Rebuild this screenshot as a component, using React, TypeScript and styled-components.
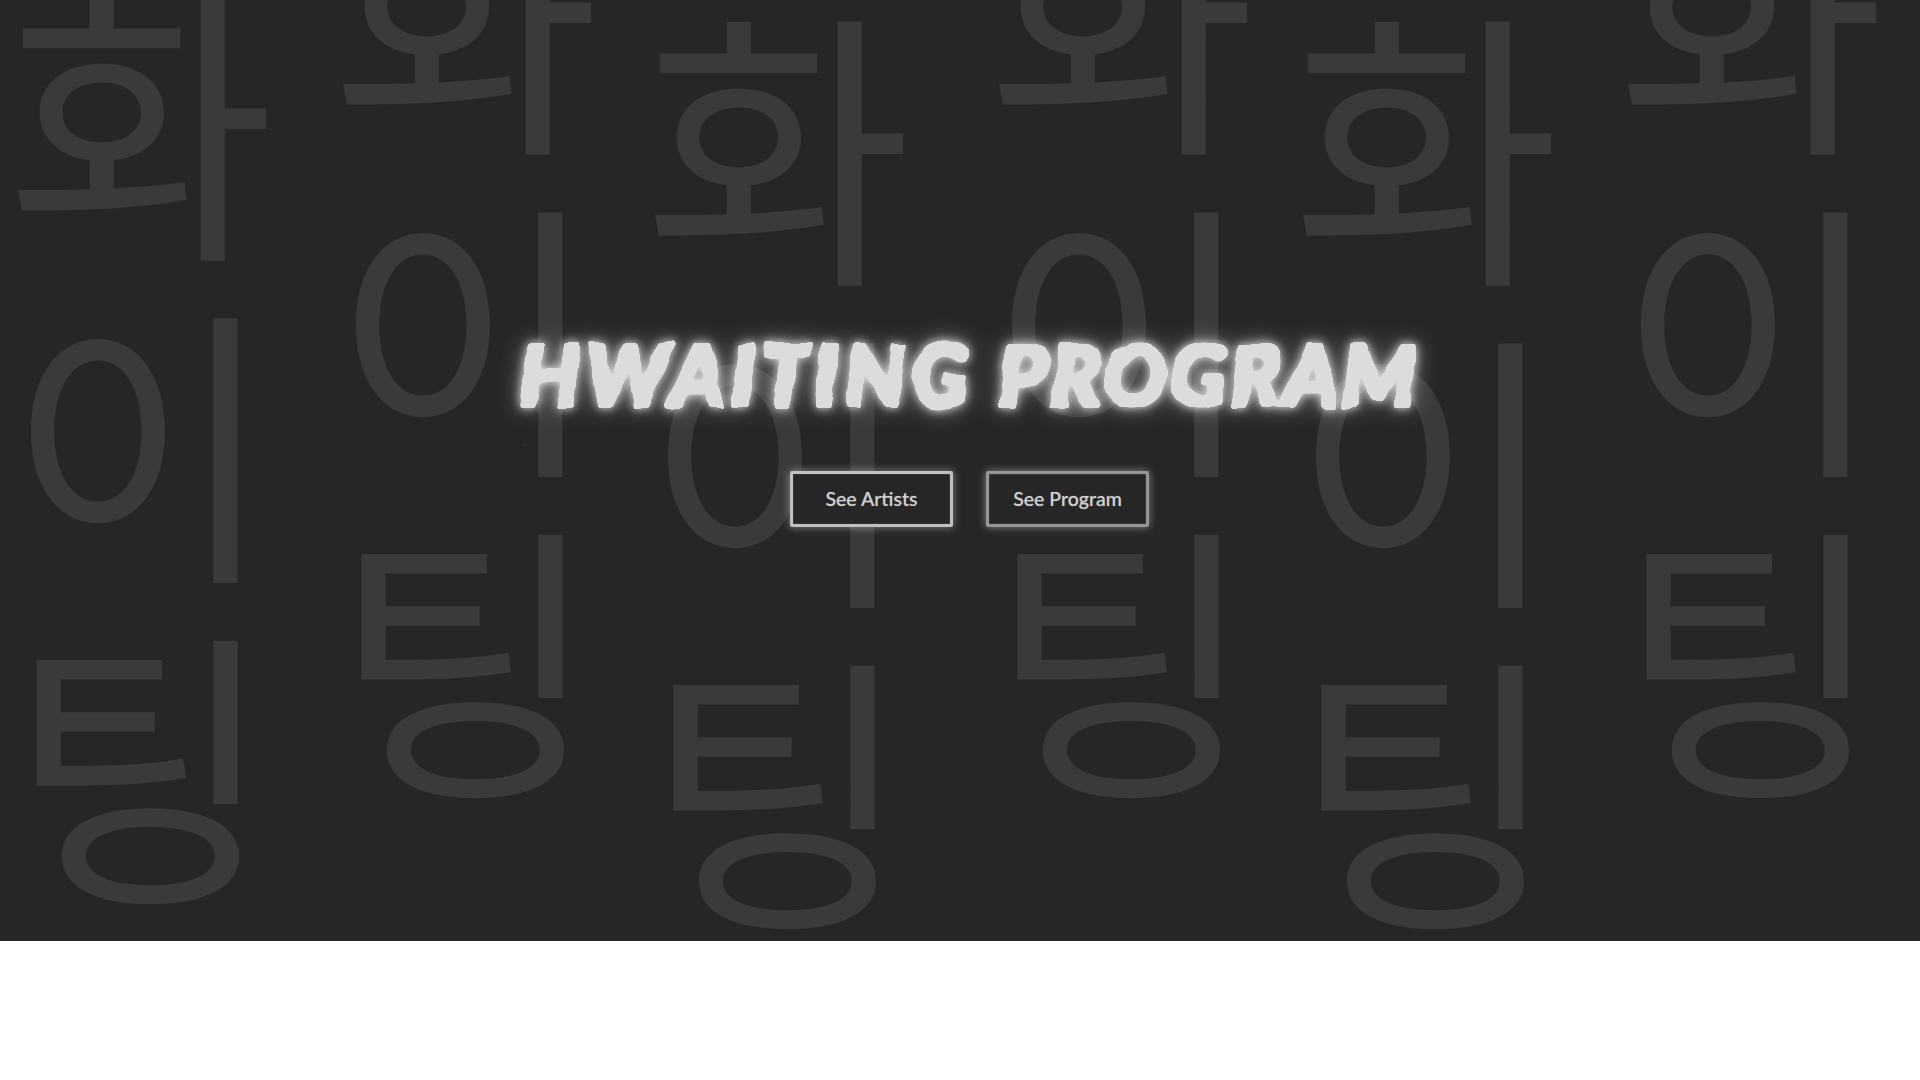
import React from "react";
import styled, { createGlobalStyle } from "styled-components";

const Global = createGlobalStyle`
  html, body { margin: 0; padding: 0; background: #fff; }
  body { font-family: "Lato", "Liberation Sans", sans-serif; overflow: hidden; }
`;

const Hero = styled.section`
  position: relative;
  height: 941px;
  background: #262626;
  overflow: hidden;
  display: flex;
  flex-direction: column;
  align-items: center;
  padding-left: 19px;
`;

const Pattern = styled.div`
  position: absolute;
  inset: 0;
  display: flex;
`;

const PatternColumn = styled.div<{ $top: number; $left: number }>`
  flex: none;
  width: 300px;
  margin-left: ${(p) => p.$left}px;
  margin-top: ${(p) => p.$top}px;
  font-family: "Noto Sans CJK KR", sans-serif;
  font-size: 292px;
  line-height: 322px;
  color: #3a3a3a;
  text-align: center;
`;

const PatternGlyph = styled.div`
  height: 322px;
`;

const Content = styled.div`
  position: relative;
  display: flex;
  flex-direction: column;
  align-items: center;
  padding-top: 320px;
`;

const Title = styled.h1`
  margin: 0;
  font-family: "Lato", "Liberation Sans", sans-serif;
  font-weight: 900;
  font-style: italic;
  font-size: 84px;
  line-height: 108px;
  color: #dcdcdc;
  white-space: nowrap;
  word-spacing: 6px;
  filter: url(#brush);
`;

const TitleWord = styled.span<{ $spacing: number }>`
  letter-spacing: ${(p) => p.$spacing}px;
`;

const StrayMark = styled.span`
  position: absolute;
  left: 0;
  top: 434px;
  font-family: "Lato", sans-serif;
  font-size: 14px;
  line-height: 18px;
  color: #181818;
`;

const Actions = styled.div`
  display: flex;
  gap: 33px;
  margin-top: 43px;
`;

const ActionButton = styled.button<{ $dim?: boolean }>`
  width: 163px;
  height: 56px;
  box-sizing: border-box;
  background: #262626;
  border: 3px solid ${(p) => (p.$dim ? "#969696" : "#c0c0c0")};
  border-radius: 2px;
  box-shadow: 0 0 8px rgba(255, 255, 255, 0.45), inset 0 0 2px rgba(255, 255, 255, 0.25);
  color: #d0d0d0;
  font-family: "Lato", sans-serif;
  font-size: 19.5px;
  font-weight: 500;
  padding: 0 0 2px;
  text-shadow: 0 0 1px rgba(255, 255, 255, 0.45);
`;

const FilterDefs = styled.svg`
  position: absolute;
  width: 0;
  height: 0;
`;

const columns = [
  { left: -9, top: -50 },
  { left: 25, top: -156 },
  { left: 12, top: -25 },
  { left: 44, top: -156 },
  { left: 4, top: -25 },
  { left: 25, top: -156 },
];

export default function App() {
  return (
    <>
      <Global />
      <FilterDefs aria-hidden="true">
        <filter id="brush" x="-5%" y="-30%" width="110%" height="160%" colorInterpolationFilters="sRGB">
          <feMorphology in="SourceAlpha" operator="dilate" radius="1.6" result="fat" />
          <feTurbulence type="fractalNoise" baseFrequency="0.035" numOctaves="2" seed="7" result="noise" />
          <feDisplacementMap in="fat" in2="noise" scale="8" xChannelSelector="R" yChannelSelector="G" result="rough" />
          <feGaussianBlur in="rough" stdDeviation="1.2" result="soft" />
          <feComponentTransfer in="soft" result="shape">
            <feFuncA type="linear" slope="7" intercept="-3" />
          </feComponentTransfer>
          <feFlood floodColor="#dcdcdc" />
          <feComposite in2="shape" operator="in" result="ink" />
          <feGaussianBlur in="shape" stdDeviation="5" result="g1" />
          <feFlood floodColor="#ffffff" floodOpacity="0.85" />
          <feComposite in2="g1" operator="in" result="glow1" />
          <feGaussianBlur in="shape" stdDeviation="12" result="g2" />
          <feFlood floodColor="#ffffff" floodOpacity="0.45" />
          <feComposite in2="g2" operator="in" result="glow2" />
          <feMerge>
            <feMergeNode in="glow2" />
            <feMergeNode in="glow1" />
            <feMergeNode in="ink" />
          </feMerge>
        </filter>
      </FilterDefs>
      <Hero>
        <Pattern aria-hidden="true">
          {columns.map((c, i) => (
            <PatternColumn key={i} $left={c.left} $top={c.top}>
              <PatternGlyph>화</PatternGlyph>
              <PatternGlyph>이</PatternGlyph>
              <PatternGlyph>팅</PatternGlyph>
            </PatternColumn>
          ))}
        </Pattern>
        <Content>
          <Title>
            <TitleWord $spacing={6}>HWAITING</TitleWord> <TitleWord $spacing={3}>PROGRAM</TitleWord>
          </Title>
          <StrayMark>:</StrayMark>
          <Actions>
            <ActionButton>See Artists</ActionButton>
            <ActionButton $dim>See Program</ActionButton>
          </Actions>
        </Content>
      </Hero>
    </>
  );
}
